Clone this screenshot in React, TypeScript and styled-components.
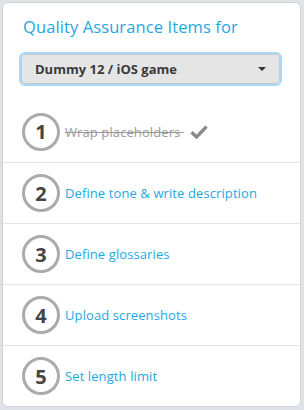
import styled, { createGlobalStyle } from "styled-components";

const GlobalStyle = createGlobalStyle`
  html, body {
    margin: 0;
    padding: 0;
    background: #dfe2e6;
  }
  body {
    font-family: "Open Sans", "Liberation Sans", sans-serif;
  }
`;

const Card = styled.div`
  margin: 2px 0 0 2px;
  width: 297px;
  height: 403px;
  background: #fff;
  border: 1px solid #cfd3d8;
  border-radius: 6px;
  box-sizing: content-box;
  overflow: hidden;
`;

const Header = styled.div`
  padding: 12px 18px 15px 16px;
`;

const Title = styled.h2`
  margin: 0 0 14px 4px;
  font-size: 16.5px;
  font-weight: 400;
  line-height: 23px;
  color: #1ea8e0;
  letter-spacing: 0.1px;
`;

const SelectWrap = styled.div`
  border: 2px solid #a9d9f8;
  border-radius: 6px;
  width: 259px;
`;

const Select = styled.div`
  display: flex;
  align-items: center;
  justify-content: space-between;
  height: 28px;
  padding: 0 13px 0 13px;
  background: #e5e5e5;
  border: 1px solid #c8c8c8;
  border-radius: 4px;
  font-size: 13px;
  font-weight: 700;
  color: #3a3a3a;
`;

const Caret = styled.span`
  width: 0;
  height: 0;
  border-left: 4px solid transparent;
  border-right: 4px solid transparent;
  border-top: 4px solid #333;
`;

const List = styled.ul`
  list-style: none;
  margin: 0;
  padding: 0;
`;

const Item = styled.li`
  display: flex;
  align-items: center;
  height: 61px;
  padding-left: 19px;
  box-sizing: border-box;
  & + & {
    border-top: 1px solid #e3e3e3;
  }
`;

const Circle = styled.span`
  display: flex;
  align-items: center;
  justify-content: center;
  width: 32px;
  height: 32px;
  border: 3px solid #ababab;
  border-radius: 50%;
  font-size: 20px;
  font-weight: 700;
  color: #444;
  margin-right: 5px;
  flex-shrink: 0;
`;

const Label = styled.span<{ $done?: boolean }>`
  font-size: 13px;
  letter-spacing: 0.1px;
  color: ${(p) => (p.$done ? "#9a9a9a" : "#1ea8e0")};
  text-decoration: ${(p) => (p.$done ? "line-through" : "none")};
  white-space: pre;
`;

const Check = () => (
  <svg width="18" height="15" viewBox="0 0 18 15" style={{ marginLeft: 6 }}>
    <path d="M1.5 8.2 L6.6 13 L16.5 2.6" fill="none" stroke="#8a8a8a" strokeWidth="3.4" strokeLinejoin="miter" />
  </svg>
);

const items = [
  { n: 1, label: "Wrap placeholders ", done: true },
  { n: 2, label: "Define tone & write description" },
  { n: 3, label: "Define glossaries" },
  { n: 4, label: "Upload screenshots" },
  { n: 5, label: "Set length limit" },
];

const App = () => {
  return (
    <>
      <GlobalStyle />
      <Card>
        <Header>
          <Title>Quality Assurance Items for</Title>
          <SelectWrap>
            <Select>
              <span>Dummy 12 / iOS game</span>
              <Caret />
            </Select>
          </SelectWrap>
        </Header>
        <List>
          {items.map((it) => (
            <Item key={it.n}>
              <Circle>{it.n}</Circle>
              <Label $done={it.done}>{it.label}</Label>
              {it.done && <Check />}
            </Item>
          ))}
        </List>
      </Card>
    </>
  );
};

export default App;
